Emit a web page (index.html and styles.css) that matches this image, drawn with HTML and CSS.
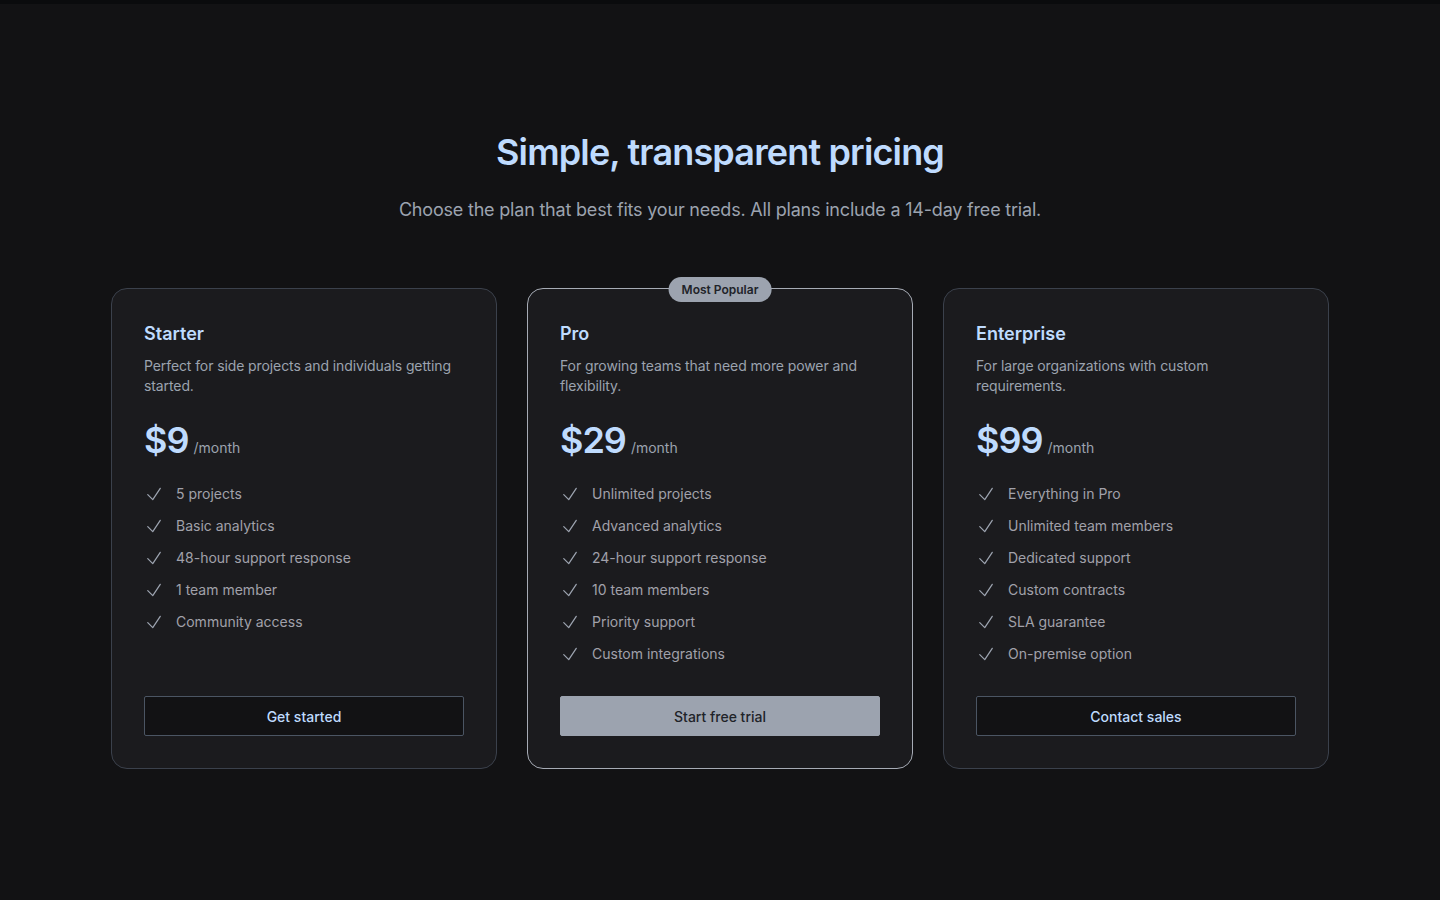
FILE: index.html
```html
<!DOCTYPE html>
<html lang="en">
<head>
<meta charset="utf-8">
<title>Pricing</title>
<link rel="stylesheet" href="styles.css">
</head>
<body>
<div class="topbar"></div>
<main class="pricing">
  <header class="intro">
    <h1 class="heading">Simple, transparent pricing</h1>
    <p class="lead">Choose the plan that best fits your needs. All plans include a 14-day free trial.</p>
  </header>
  <div class="plans">
    <section class="plan">
      <h2 class="plan-name">Starter</h2>
      <p class="plan-desc">Perfect for side projects and individuals getting started.</p>
      <div class="price"><span class="amount">$9</span><span class="period">/month</span></div>
      <ul class="features">
        <li><svg class="check" viewBox="0 0 24 24"><path d="M4.5 12.75l6 6 9-13.5"/></svg>5 projects</li>
        <li><svg class="check" viewBox="0 0 24 24"><path d="M4.5 12.75l6 6 9-13.5"/></svg>Basic analytics</li>
        <li><svg class="check" viewBox="0 0 24 24"><path d="M4.5 12.75l6 6 9-13.5"/></svg>48-hour support response</li>
        <li><svg class="check" viewBox="0 0 24 24"><path d="M4.5 12.75l6 6 9-13.5"/></svg>1 team member</li>
        <li><svg class="check" viewBox="0 0 24 24"><path d="M4.5 12.75l6 6 9-13.5"/></svg>Community access</li>
      </ul>
      <button class="btn btn-outline">Get started</button>
    </section>
    <section class="plan plan-featured">
      <span class="badge">Most Popular</span>
      <h2 class="plan-name">Pro</h2>
      <p class="plan-desc">For growing teams that need more power and flexibility.</p>
      <div class="price"><span class="amount">$29</span><span class="period">/month</span></div>
      <ul class="features">
        <li><svg class="check" viewBox="0 0 24 24"><path d="M4.5 12.75l6 6 9-13.5"/></svg>Unlimited projects</li>
        <li><svg class="check" viewBox="0 0 24 24"><path d="M4.5 12.75l6 6 9-13.5"/></svg>Advanced analytics</li>
        <li><svg class="check" viewBox="0 0 24 24"><path d="M4.5 12.75l6 6 9-13.5"/></svg>24-hour support response</li>
        <li><svg class="check" viewBox="0 0 24 24"><path d="M4.5 12.75l6 6 9-13.5"/></svg>10 team members</li>
        <li><svg class="check" viewBox="0 0 24 24"><path d="M4.5 12.75l6 6 9-13.5"/></svg>Priority support</li>
        <li><svg class="check" viewBox="0 0 24 24"><path d="M4.5 12.75l6 6 9-13.5"/></svg>Custom integrations</li>
      </ul>
      <button class="btn btn-solid">Start free trial</button>
    </section>
    <section class="plan">
      <h2 class="plan-name">Enterprise</h2>
      <p class="plan-desc">For large organizations with custom requirements.</p>
      <div class="price"><span class="amount">$99</span><span class="period">/month</span></div>
      <ul class="features">
        <li><svg class="check" viewBox="0 0 24 24"><path d="M4.5 12.75l6 6 9-13.5"/></svg>Everything in Pro</li>
        <li><svg class="check" viewBox="0 0 24 24"><path d="M4.5 12.75l6 6 9-13.5"/></svg>Unlimited team members</li>
        <li><svg class="check" viewBox="0 0 24 24"><path d="M4.5 12.75l6 6 9-13.5"/></svg>Dedicated support</li>
        <li><svg class="check" viewBox="0 0 24 24"><path d="M4.5 12.75l6 6 9-13.5"/></svg>Custom contracts</li>
        <li><svg class="check" viewBox="0 0 24 24"><path d="M4.5 12.75l6 6 9-13.5"/></svg>SLA guarantee</li>
        <li><svg class="check" viewBox="0 0 24 24"><path d="M4.5 12.75l6 6 9-13.5"/></svg>On-premise option</li>
      </ul>
      <button class="btn btn-outline">Contact sales</button>
    </section>
  </div>
</main>
</body>
</html>
```
FILE: styles.css
```css
* { box-sizing: border-box; }
html, body { margin: 0; padding: 0; }
body {
  background: #121214;
  font-family: Inter, "Noto Sans", "Liberation Sans", sans-serif;
  color: #a1a1aa;
  min-height: 900px;
}
.topbar { height: 4px; background: #0a0b0d; }
.pricing { padding: 128px 0 0; }
.intro { text-align: center; }
.heading {
  margin: 0;
  font-size: 36px;
  line-height: 40px;
  font-weight: 600;
  letter-spacing: -0.85px;
  color: #bfdbfe;
}
.lead {
  margin: 24px 0 0;
  font-size: 18px;
  line-height: 28px;
  letter-spacing: -0.2px;
  color: #9ca3af;
}
.plans {
  width: 1218px;
  margin: 64px auto 0;
  display: grid;
  grid-template-columns: repeat(3, 1fr);
  gap: 30px;
}
.plan {
  position: relative;
  display: flex;
  flex-direction: column;
  background: #1b1b1e;
  border: 1px solid #3b414c;
  border-radius: 16px;
  padding: 31px 32px 32px;
}
.plan-featured { border-color: #a6abb5; }
.badge {
  position: absolute;
  top: -12px;
  left: 50%;
  transform: translateX(-50%);
  background: #9ca3af;
  color: #1f2329;
  font-size: 12px;
  line-height: 17px;
  font-weight: 600;
  padding: 4px 13px;
  border-radius: 999px;
  white-space: nowrap;
}
.plan-name {
  margin: 0;
  font-size: 18px;
  line-height: 28px;
  font-weight: 600;
  color: #bfdbfe;
}
.plan-desc {
  margin: 8px 0 0;
  font-size: 14px;
  line-height: 20px;
  letter-spacing: -0.1px;
  color: #9ca3af;
}
.price {
  margin-top: 24px;
  display: flex;
  align-items: baseline;
  gap: 5px;
}
.amount {
  font-size: 36px;
  line-height: 40px;
  font-weight: 600;
  letter-spacing: -1px;
  color: #bfdbfe;
}
.period { font-size: 14px; color: #9ca3af; }
.features {
  list-style: none;
  margin: 24px 0 32px;
  padding: 0;
  display: flex;
  flex-direction: column;
  gap: 12px;
}
.features li {
  display: flex;
  align-items: center;
  gap: 12px;
  font-size: 14px;
  line-height: 20px;
  color: #a1a1aa;
}
.check {
  width: 20px;
  height: 20px;
  flex: none;
  fill: none;
  stroke: #9ca3af;
  stroke-width: 1.5;
  stroke-linecap: round;
  stroke-linejoin: round;
}
.btn {
  margin-top: auto;
  height: 40px;
  width: 100%;
  font-family: inherit;
  font-size: 14px;
  font-weight: 500;
  border-radius: 2px;
  cursor: pointer;
}
.btn-outline {
  background: #121214;
  border: 1px solid #4b5563;
  color: #bfdbfe;
}
.btn-solid {
  background: #9ca3af;
  border: 1px solid #9ca3af;
  color: #1f2329;
}
```
